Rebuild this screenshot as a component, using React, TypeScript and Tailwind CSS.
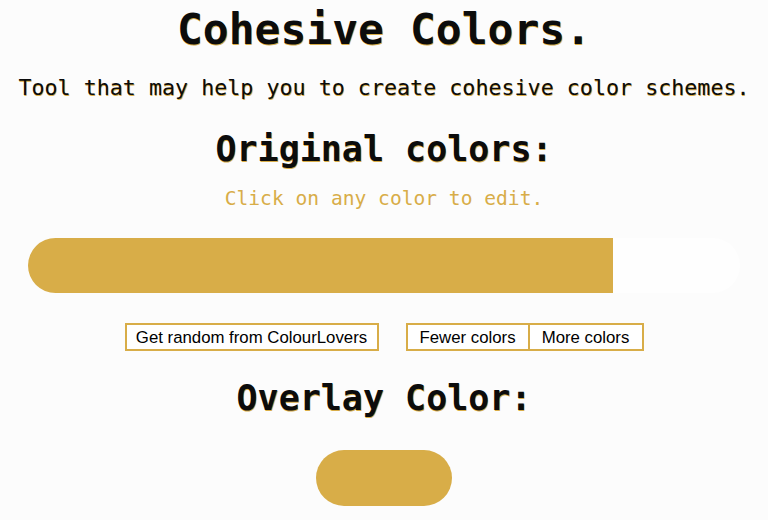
const mono = "font-['DejaVu_Sans_Mono','Liberation_Mono',monospace]"
const glow = '[text-shadow:0.6px_0.6px_0_#d8ad48]'

const colors = ['#d8ad48']

const App = () => {
  return (
    <main className={`flex min-h-[520px] flex-col items-center bg-[#fcfcfc] text-[#0c0c0c] ${mono}`}>
      <h1 className={`mt-[8px] text-[43px] leading-none font-bold ${glow}`}>Cohesive Colors.</h1>
      <p className={`mt-[26px] text-[21.7px] leading-none ${glow}`}>
        Tool that may help you to create cohesive color schemes.
      </p>

      <h2 className={`mt-[33px] text-[35px] leading-none font-bold ${glow}`}>Original colors:</h2>
      <p className="mt-[22px] text-[19.6px] leading-none text-[#d8ad48]">Click on any color to edit.</p>

      {/* color bar */}
      <div className="mt-[30px] flex h-[55px] w-[712px] overflow-hidden rounded-full bg-[#fefefe]">
        {colors.map((c) => (
          <div key={c} className="h-full w-[585px] cursor-pointer" style={{ backgroundColor: c }} />
        ))}
      </div>

      <div className="mt-[30px] flex gap-[27px] font-['Liberation_Sans',Arial,sans-serif] text-[16.8px] text-black">
        <button className="flex h-[28px] w-[254px] items-center justify-center border-2 border-[#d8ad48] bg-white">
          Get random from ColourLovers
        </button>
        <div className="flex">
          <button className="flex h-[28px] w-[124px] items-center justify-center border-2 border-[#d8ad48] bg-white">
            Fewer colors
          </button>
          <button className="flex h-[28px] w-[114px] items-center justify-center border-2 border-l-0 border-[#d8ad48] bg-white">
            More colors
          </button>
        </div>
      </div>

      <h2 className={`mt-[30px] text-[35px] leading-none font-bold ${glow}`}>Overlay Color:</h2>
      <div className="mt-[34px] h-[56px] w-[136px] cursor-pointer rounded-full bg-[#d8ad48]" />
    </main>
  )
}

export default App
